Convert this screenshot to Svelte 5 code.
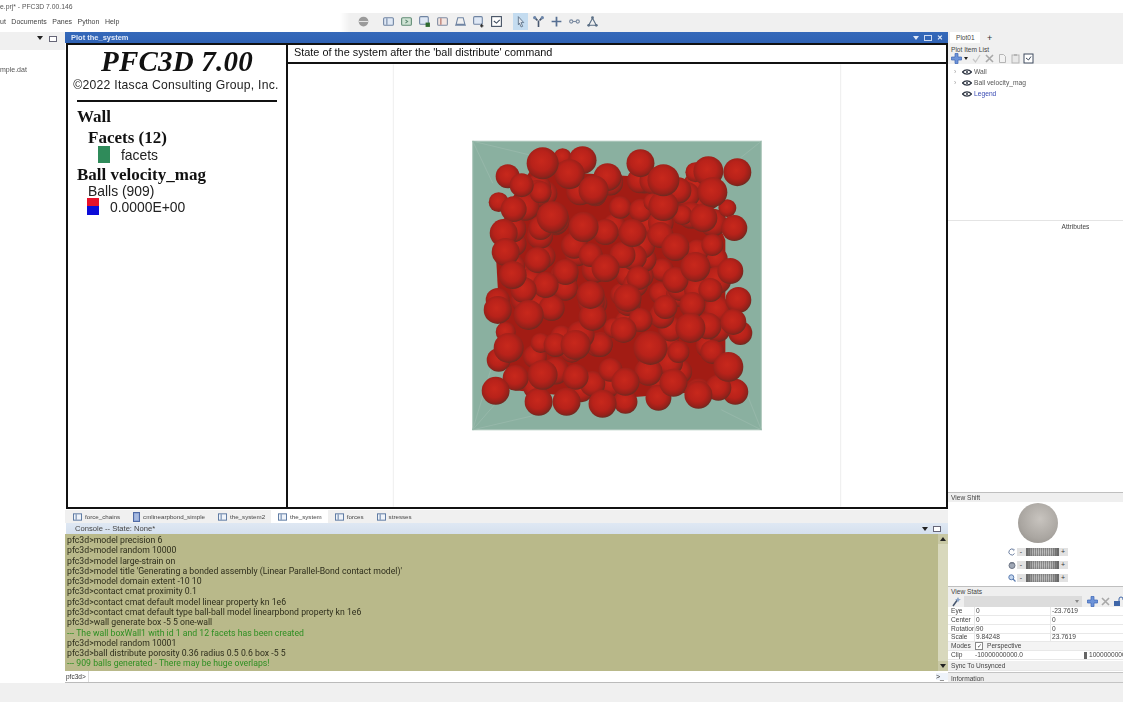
<script>
	// balls in page coordinates [x, y, r], read off the plot
	const visible = [
		[542,163,16],[562,157,9],[582,160,14],[569,174,15],[507,176,12],[521,185,12],[540,192,11],[593,190,15],[607,177,14],
		[498,202,10],[513,209,13],[552,217,16],[583,227,15],[503,233,14],[540,228,12],[505,252,14],[537,260,13],[565,272,13],
		[512,275,14],[605,268,14],[605,232,13],[640,163,14],[663,180,16],[708,171,15],[737,172,14],[695,172,10],[712,192,15],
		[663,206,15],[652,202,9],[703,218,14],[727,208,9],[734,228,13],[632,233,14],[675,247,14],[660,235,13],[622,255,13],
		[695,267,15],[730,271,13],[712,245,11],[638,278,12],[682,215,10],[627,298,14],[665,307,12],[692,305,13],[738,300,13],
		[623,330,13],[690,328,15],[733,322,13],[740,333,12],[650,348,17],[678,352,11],[728,367,15],[712,352,12],[648,372,14],
		[625,382,14],[673,383,14],[698,395,14],[735,392,13],[658,398,13],[625,402,12],[718,388,13],[497,310,14],[497,300,12],
		[528,315,15],[551,308,13],[508,348,15],[498,360,12],[540,343,10],[580,335,14],[575,345,15],[542,375,15],[575,377,13],
		[495,391,14],[538,402,14],[566,402,14],[602,404,14],[592,317,14],[613,328,10],[515,378,13],[505,332,10],[590,295,14],
		[555,345,12],[600,345,12],[640,320,12],[610,370,12],[675,280,13],[710,290,12],[590,255,12],[545,285,13],[523,290,13]
	];

	// balls behind the visible ones, so no wall shows through the middle
	let seed = 17;
	function rnd() {
		seed = (seed * 16807) % 2147483647;
		return seed / 2147483647;
	}
	const filler = [];
	for (let i = 0; i < 90; i++) {
		filler.push([512 + rnd() * 208, 178 + rnd() * 215, 11 + rnd() * 3]);
	}
	// nearer balls look bigger, so paint by radius
	const bySize = (a, b) => a[2] - b[2];
	const balls = [...filler.sort(bySize), ...visible.sort(bySize)];

	const tabs = [
		{ name: 'force_chains' },
		{ name: 'cmlinearpbond_simple', script: true },
		{ name: 'the_system2' },
		{ name: 'the_system', active: true },
		{ name: 'forces' },
		{ name: 'stresses' }
	];

	const lines = [
		['pfc3d>model precision 6'],
		['pfc3d>model random 10000'],
		['pfc3d>model large-strain on'],
		["pfc3d>model title 'Generating a bonded assembly (Linear Parallel-Bond contact model)'"],
		['pfc3d>model domain extent -10 10'],
		['pfc3d>contact cmat proximity 0.1'],
		['pfc3d>contact cmat default model linear property kn 1e6'],
		['pfc3d>contact cmat default type ball-ball model linearpbond property kn 1e6'],
		['pfc3d>wall generate box -5 5 one-wall'],
		['--- The wall boxWall1 with id 1 and 12 facets has been created', true],
		['pfc3d>model random 10001'],
		['pfc3d>ball distribute porosity 0.36 radius 0.5 0.6 box -5 5'],
		['--- 909 balls generated - There may be huge overlaps!', true]
	];

	const stats = [
		['Eye', '0', '-23.7619'],
		['Center', '0', '0'],
		['Rotation', '90', '0'],
		['Scale', '9.84248', '23.7619']
	];
</script>

{#snippet winIcon()}
	<svg class="tab-icon" viewBox="0 0 10 8"><rect x=".5" y=".5" width="9" height="7" fill="#eef3fa" stroke="#51709c"/><path d="M3.5 1v6" stroke="#51709c"/></svg>
{/snippet}

{#snippet eye()}
	<svg class="eye" viewBox="0 0 10 6"><path d="M.5 3C3 .2 7 .2 9.5 3 7 5.8 3 5.8.5 3Z" fill="none" stroke="#2c3340" stroke-width="1.2"/><circle cx="5" cy="3" r="1" fill="#2c3340"/></svg>
{/snippet}

{#snippet cross()}
	<svg class="tool" viewBox="0 0 11 11"><path d="M4 .5h3v3.500h3.500v3H7v3.500H4V7H.5V4H4Z" fill="#6d93d8" stroke="#3a64b4" stroke-width=".7"/></svg>
{/snippet}

<div class="app">
	<div class="titlebar">e.prj* - PFC3D 7.00.146</div>

	<div class="menubar">
		<nav class="menu">
			<span class="cut">ut</span><span>Documents</span><span>Panes</span><span>Python</span><span>Help</span>
		</nav>
		<div class="toolbar">
			<svg class="tb" viewBox="0 0 12 12"><circle cx="6" cy="6" r="4.500" fill="#9a9a9a"/><path d="M1.500 6h9" stroke="#e4e4e4"/></svg>
			<div class="tb-group">
				<svg class="tb" viewBox="0 0 12 12"><rect x="1.500" y="2.500" width="9" height="7" rx="1" fill="#dfe8f5" stroke="#6f84a2"/><path d="M4.500 3v6" stroke="#6f84a2"/></svg>
				<svg class="tb" viewBox="0 0 12 12"><rect x="1.500" y="2.500" width="9" height="7" rx="1" fill="#cfe3d4" stroke="#5f8a74"/><path d="M5 4.500l2 1.500-2 1.500" fill="none" stroke="#5f8a74"/></svg>
				<svg class="tb" viewBox="0 0 12 12"><rect x="1.500" y="1.500" width="8" height="7" rx="1" fill="#dfe8f5" stroke="#6f84a2"/><rect x="7" y="7" width="4" height="4" fill="#2f6b2f"/></svg>
				<svg class="tb" viewBox="0 0 12 12"><rect x="1.500" y="2.500" width="9" height="7" rx="1" fill="#f3e6e2" stroke="#7f8ca2"/><path d="M4.500 3v6" stroke="#b0665a"/></svg>
				<svg class="tb" viewBox="0 0 12 12"><path d="M3.500 2.500h5l1.500 6h-8ZM1 9.500h10" fill="none" stroke="#6f84a2"/></svg>
				<svg class="tb" viewBox="0 0 12 12"><rect x="1.500" y="1.500" width="8" height="7" rx="1" fill="#dfe8f5" stroke="#6f84a2"/><path d="M9 8v3.500M7.500 10h3" stroke="#222"/></svg>
				<svg class="tb" viewBox="0 0 12 12"><rect x="1.500" y="1.500" width="9" height="9" fill="#fff" stroke="#3e4b5e"/><path d="M3.500 5.500l2.500 2 3-3" fill="none" stroke="#3e4b5e"/></svg>
			</div>
			<div class="tb-group second">
				<span class="tb-on"><svg class="tb" viewBox="0 0 12 12"><path d="M4 1.500l5 5.500H6.500L8 10.500l-1.500.5L5 7.500 4 9Z" fill="#dfe6ef" stroke="#5c7086" stroke-width=".8"/></svg></span>
				<svg class="tb" viewBox="0 0 12 12"><path d="M2 2l3 3M10 2L7 5M6 5v6" stroke="#46566e" stroke-width="1.500"/><circle cx="2.500" cy="2.500" r="1.500" fill="#6d86aa"/><circle cx="9.500" cy="2.500" r="1.500" fill="#6d86aa"/></svg>
				<svg class="tb" viewBox="0 0 12 12"><path d="M6 1.500v9M1.500 6h9" stroke="#566f92" stroke-width="1.600"/></svg>
				<svg class="tb" viewBox="0 0 12 12"><circle cx="3" cy="6" r="1.500" fill="none" stroke="#7a8aa0"/><circle cx="9" cy="6" r="1.500" fill="none" stroke="#7a8aa0"/><path d="M4.500 6h3" stroke="#7a8aa0"/></svg>
				<svg class="tb" viewBox="0 0 12 12"><path d="M6 3L2.500 9.500h7Z" fill="none" stroke="#5c7086"/><circle cx="6" cy="2.500" r="1.300" fill="#5c7086"/><circle cx="2.500" cy="9.500" r="1.300" fill="#5c7086"/><circle cx="9.500" cy="9.500" r="1.300" fill="#5c7086"/></svg>
			</div>
		</div>
	</div>

	<div class="workspace">
		<aside class="project">
			<div class="project-head">
				<span class="arrow-down"></span><span class="mini-btn"></span>
			</div>
			<div class="project-file">mple.dat</div>
		</aside>

		<main class="center">
			<div class="plot-title">
				<span>Plot the_system</span>
				<span class="win-btns"><span class="arrow-down white"></span><span class="mini-btn white"></span><span class="close">✕</span></span>
			</div>
			<div class="plot">
				<div class="legend">
					<h1>PFC3D 7.00</h1>
					<p class="copy">©2022 Itasca Consulting Group, Inc.</p>
					<hr />
					<h2>Wall</h2>
					<h3>Facets (12)</h3>
					<div class="legend-row facets"><span class="swatch green"></span>facets</div>
					<h2 class="ball-head">Ball velocity_mag</h2>
					<div class="balls-label">Balls (909)</div>
					<div class="legend-row velocity"><span class="swatch redblue"></span>0.0000E+00</div>
				</div>
				<div class="view">
					<div class="view-title">State of the system after the 'ball distribute' command</div>
					<svg class="scene" viewBox="287 64 659 443">
						<defs>
							<radialGradient id="ball" cx=".46" cy=".43" r=".57">
								<stop offset="0" stop-color="#c8281c" />
								<stop offset=".55" stop-color="#b8221a" />
								<stop offset=".85" stop-color="#96211a" />
								<stop offset="1" stop-color="#6e2a20" />
							</radialGradient>
						</defs>
						<path d="M392.500 64v443M840.500 64v443" stroke="#eeeeee" />
						<rect x="472" y="141" width="289" height="289" fill="#8ab0a0" stroke="#a9c4b8" />
						<path d="M472 141l58 14M472 141l20 42M761 141l-30 24M472 430l40-46M472 430l60-14M472 430l18-60M761 430l-20-50M761 430l-40-20" stroke="#97b8aa" fill="none" />
						<path d="M530 170L700 180 725 240V390L600 400 510 390 500 340 495 250 510 200Z" fill="#a21c14" />
						{#each balls as [x, y, r]}
							<circle cx={x} cy={y} {r} fill="url(#ball)" />
						{/each}
					</svg>
				</div>
			</div>

			<div class="tabs">
				{#each tabs as tab}
					<div class="tab" class:active={tab.active}>
						{#if tab.script}
							<svg class="tab-icon script" viewBox="0 0 7 10"><rect x=".5" y=".5" width="6" height="9" fill="#8ea6d6" stroke="#4f6aa5"/><path d="M1.500 3h4M1.500 5h4M1.500 7h4" stroke="#e4ebf8" stroke-width=".6"/></svg>
						{:else}
							{@render winIcon()}
						{/if}
						<span>{tab.name}</span>
					</div>
				{/each}
			</div>

			<div class="console-head">
				<span>Console -- State: None*</span>
				<span class="win-btns dark"><span class="arrow-down"></span><span class="mini-btn"></span></span>
			</div>
			<div class="console">
				<div class="console-lines">
					{#each lines as [text, ok]}
						<div class:ok>{text}</div>
					{/each}
				</div>
				<div class="scrollbar">
					<span class="sb-btn"><span class="tri up"></span></span>
					<span class="sb-btn"><span class="tri down"></span></span>
				</div>
			</div>
			<div class="input-row">
				<span class="prompt">pfc3d&gt;</span>
				<span class="input"></span>
				<span class="shell">&gt;_</span>
			</div>
		</main>

		<aside class="side">
			<div class="side-tabs"><span class="side-tab">Plot01</span><span class="plus">+</span></div>
			<div class="items-label">Plot Item List</div>
			<div class="items-tools">
				{@render cross()}
				<span class="mini-tri"></span>
				<svg class="tool" viewBox="0 0 11 11"><path d="M2 6l2.500 3L9 2" fill="none" stroke="#c8c8c8" stroke-width="1.300"/></svg>
				<svg class="tool" viewBox="0 0 11 11"><path d="M2 2l7 7M9 2l-7 7" stroke="#a8a8a8" stroke-width="1.600"/></svg>
				<svg class="tool" viewBox="0 0 11 11"><path d="M2.500 1.500h4l2 2v6h-6Z" fill="#f2f2f2" stroke="#b5b5b5"/></svg>
				<svg class="tool" viewBox="0 0 11 11"><rect x="2" y="2" width="7" height="8" fill="#e8e8e8" stroke="#b5b5b5"/><rect x="4" y="1" width="3" height="2" fill="#b5b5b5"/></svg>
				<svg class="tool" viewBox="0 0 11 11"><rect x="1" y="1" width="9" height="9" fill="#fff" stroke="#3e4b5e"/><path d="M3 5l2.500 2L8 3.500" fill="none" stroke="#3e4b5e"/></svg>
			</div>
			<div class="tree">
				<div class="tree-row"><span class="chev">›</span>{@render eye()}<span>Wall</span></div>
				<div class="tree-row"><span class="chev">›</span>{@render eye()}<span>Ball velocity_mag</span></div>
				<div class="tree-row legend-item"><span class="chev"></span>{@render eye()}<span>Legend</span></div>
			</div>
			<div class="attributes">Attributes</div>

			<div class="pane-head">View Shift</div>
			<div class="shift">
				<div class="sphere"></div>
				<div class="slider-row">
					<svg class="slider-icon" viewBox="0 0 8 8"><path d="M6.500 5.500A3 3 0 1 1 5.500 1.500" fill="none" stroke="#6c7fa0"/><path d="M5 .5l1.500 1.500L5 3" fill="none" stroke="#6c7fa0" stroke-width=".7"/></svg>
					<span class="step">-</span><span class="track"></span><span class="step">+</span>
				</div>
				<div class="slider-row">
					<svg class="slider-icon" viewBox="0 0 8 8"><circle cx="4" cy="4.500" r="3" fill="#a0a8b6" stroke="#6c7484"/><path d="M3 1v2M5 1v2" stroke="#6c7484"/></svg>
					<span class="step">-</span><span class="track"></span><span class="step">+</span>
				</div>
				<div class="slider-row">
					<svg class="slider-icon" viewBox="0 0 8 8"><circle cx="3.300" cy="3.300" r="2.500" fill="#c4d6ee" stroke="#5a7cb0"/><path d="M5 5l2.500 2.500" stroke="#5a7cb0" stroke-width="1.200"/></svg>
					<span class="step">-</span><span class="track"></span><span class="step">+</span>
				</div>
			</div>

			<div class="pane-head stats-head">View Stats</div>
			<div class="stats-tools">
				<svg class="wand" viewBox="0 0 11 11"><path d="M2 10L7 3" stroke="#44546c" stroke-width="1.500"/><path d="M7 1l1 2 2 .5-2 1L7 6.500 6 4.500l-2-1 2-.5Z" fill="#8aa4c8"/></svg>
				<div class="stats-combo"><span class="mini-tri gray"></span></div>
				{@render cross()}
				<svg class="tool" viewBox="0 0 11 11"><path d="M2 2l7 7M9 2l-7 7" stroke="#a8a8a8" stroke-width="1.600"/></svg>
				<svg class="tool" viewBox="0 0 11 11"><rect x="1" y="5" width="6" height="5" fill="#3f66a8"/><path d="M6 5V3a2 2 0 0 1 4 0v1" fill="none" stroke="#3f66a8"/></svg>
			</div>
			<div class="stats">
				{#each stats as [label, a, b]}
					<div class="stat-row">
						<span class="stat-label">{label}</span><span class="cell">{a}</span><span class="cell">{b}</span>
					</div>
				{/each}
				<div class="stat-row plain">
					<span class="stat-label">Modes</span>
					<span class="modes"><span class="check">✓</span>Perspective</span>
				</div>
				<div class="stat-row plain clip">
					<span class="stat-label">Clip</span><span class="clip-a">-10000000000.0</span><span class="spin"></span><span>1000000000</span>
				</div>
				<div class="stat-row plain sync"><span class="stat-label">Sync To</span><span>Unsynced</span></div>
			</div>
			<div class="information">Information</div>
		</aside>
	</div>

	<div class="statusbar"></div>
</div>

<style>
	:global(body) {
		margin: 0;
		background: #fff;
	}

	.app {
		width: 1123px;
		height: 702px;
		display: flex;
		flex-direction: column;
		overflow: hidden;
		font-family: "Liberation Sans", Arial, sans-serif;
		color: #333;
		filter: blur(0.4px);
	}

	.titlebar {
		height: 13px;
		line-height: 14px;
		font-size: 6.800px;
		color: #555;
		white-space: nowrap;
	}

	.menubar {
		height: 19px;
		display: flex;
		background: linear-gradient(90deg, #fff 0, #fff 340px, #f0f0f0 350px);
	}

	.menu {
		width: 350px;
		display: flex;
		align-items: center;
		gap: 5.500px;
		font-size: 7px;
		color: #444;
		padding-bottom: 3px;
		box-sizing: border-box;
	}

	.toolbar {
		display: flex;
		align-items: center;
		padding: 0 0 2px 7px;
	}

	.tb {
		width: 13px;
		height: 13px;
		display: block;
	}

	.tb-group {
		display: flex;
		align-items: center;
		gap: 5px;
		margin-left: 12px;
	}

	.tb-group.second {
		margin-left: 10px;
	}

	.tb-on {
		background: #c4dcf0;
		padding: 2px 1px;
		margin-right: -1px;
	}

	.workspace {
		flex: 1;
		display: flex;
		min-height: 0;
	}

	.project {
		width: 65px;
		flex: none;
		background: #fff;
	}

	.project-head {
		height: 18px;
		background: #f0f0f0;
		display: flex;
		justify-content: flex-end;
		align-items: flex-start;
		gap: 6px;
		padding: 3px 8px 0 0;
		box-sizing: border-box;
	}

	.project-file {
		margin-top: 16px;
		font-size: 7px;
		color: #555;
		white-space: nowrap;
	}

	.arrow-down {
		width: 0;
		height: 0;
		margin-top: 1px;
		border: 3px solid transparent;
		border-top: 4px solid #222;
		border-bottom: 0;
	}

	.arrow-down.white {
		border-top-color: #dfe8f7;
	}

	.mini-btn {
		width: 6px;
		height: 4px;
		margin-top: 1px;
		background: #fff;
		border: 1px solid #667;
	}

	.mini-btn.white {
		background: transparent;
		border-color: #cfdcf2;
	}

	.center {
		width: 883px;
		flex: none;
		display: flex;
		flex-direction: column;
	}

	.plot-title {
		height: 11px;
		background: linear-gradient(#3569ba, #2f62b4);
		color: #dfe8f7;
		font-size: 7.500px;
		font-weight: 700;
		line-height: 11px;
		padding: 0 5px 0 6px;
		display: flex;
		justify-content: space-between;
	}

	.win-btns {
		display: flex;
		align-items: center;
		gap: 5px;
		height: 11px;
	}

	.close {
		font-size: 7px;
		color: #e6eefa;
	}

	.plot {
		height: 466px;
		box-sizing: border-box;
		margin-left: 1px;
		border: 2px solid #111;
		display: flex;
		background: #fff;
	}

	.legend {
		width: 218px;
		flex: none;
		border-right: 2px solid #111;
		color: #111;
	}

	.legend h1 {
		margin: 0;
		font: italic 700 29px/32px "Liberation Serif", serif;
		letter-spacing: 0.2px;
		text-align: center;
		color: #111;
	}

	.copy {
		margin: 0;
		font-size: 12.200px;
		line-height: 16px;
		letter-spacing: 0.25px;
		text-align: center;
		white-space: nowrap;
		color: #222;
		transform: translateX(-1px);
	}

	.legend hr {
		margin: 7px 9px 0 9px;
		height: 2px;
		background: #111;
		border: 0;
	}

	.legend h2 {
		margin: 5px 0 0 9px;
		font: 700 17px/20px "Liberation Serif", serif;
	}

	.legend h3 {
		margin: 1px 0 0 20px;
		font: 700 17px/20px "Liberation Serif", serif;
	}

	.legend-row {
		display: flex;
		align-items: center;
		font-size: 13.900px;
		height: 17px;
		color: #222;
	}

	.facets {
		padding-left: 30px;
		gap: 11px;
		margin-top: -2px;
	}

	.velocity {
		padding-left: 19px;
		gap: 11px;
		margin-top: -2px;
	}

	.swatch {
		width: 12px;
		height: 17px;
		flex: none;
	}

	.green {
		background: #2f8b5a;
	}

	.redblue {
		background: linear-gradient(#e8112a 50%, #0c0cd8 50%);
	}

	.legend .ball-head {
		margin-top: 2px;
	}

	.balls-label {
		margin: -2px 0 0 20px;
		font-size: 13.900px;
		line-height: 17px;
		color: #222;
	}

	.view {
		flex: 1;
		display: flex;
		flex-direction: column;
		min-width: 0;
	}

	.view-title {
		height: 17px;
		line-height: 15px;
		padding-left: 6px;
		font-size: 10.900px;
		color: #111;
		border-bottom: 2px solid #111;
		flex: none;
	}

	.scene {
		display: block;
		width: 100%;
		flex: 1;
		min-height: 0;
	}

	.tabs {
		height: 13px;
		margin-top: 1px;
		display: flex;
		background: #f0f0f0;
		padding-left: 1px;
	}

	.tab {
		display: flex;
		align-items: center;
		gap: 3px;
		padding: 0 6px 0 7px;
		font-size: 6.200px;
		color: #444;
		white-space: nowrap;
	}

	.tab.active {
		background: #fff;
	}

	.tab-icon {
		width: 9px;
		height: 8px;
		flex: none;
	}

	.tab-icon.script {
		width: 7px;
		height: 10px;
	}

	.console-head {
		height: 11px;
		background: linear-gradient(#dfe8f3, #d5e0ee);
		display: flex;
		justify-content: space-between;
		padding: 0 5px 0 9px;
		font-size: 7.600px;
		line-height: 11px;
		color: #444;
		margin-left: 1px;
	}

	.win-btns.dark {
		padding-right: 2px;
	}

	.console {
		height: 137px;
		display: flex;
		background: #b9b98a;
	}

	.console-lines {
		flex: 1;
		padding: 1px 0 0 2px;
		font-family: Roboto, "Liberation Sans", sans-serif;
		font-size: 8.700px;
		line-height: 10.280px;
		color: #2e2e1c;
		white-space: nowrap;
	}

	.ok {
		color: #2e8f22;
	}

	.scrollbar {
		width: 10px;
		display: flex;
		flex-direction: column;
		justify-content: space-between;
		background: #d8d8bc;
	}

	.sb-btn {
		height: 10px;
		display: flex;
		align-items: center;
		justify-content: center;
		background: #c8c8a4;
	}

	.tri {
		width: 0;
		height: 0;
		border: 3px solid transparent;
	}

	.tri.up {
		border-top: 0;
		border-bottom: 4px solid #222;
	}

	.tri.down {
		border-bottom: 0;
		border-top: 4px solid #222;
	}

	.input-row {
		height: 12px;
		display: flex;
		align-items: center;
		font-size: 6.500px;
		background: #fff;
		border-bottom: 1px solid #bbb;
		box-sizing: border-box;
	}

	.prompt {
		width: 22px;
		padding-left: 1px;
	}

	.input {
		flex: 1;
		align-self: stretch;
		border-left: 1px solid #ddd;
	}

	.shell {
		width: 12px;
		font-size: 7px;
		color: #222;
		background: #eef3fa;
	}

	.side {
		flex: 1;
		min-width: 0;
		display: flex;
		flex-direction: column;
		font-size: 6.600px;
		color: #444;
		white-space: nowrap;
		overflow: hidden;
		background: #fff;
	}

	.side-tabs {
		height: 11px;
		display: flex;
		background: #f0f0f0;
		padding-left: 2px;
		flex: none;
	}

	.side-tab {
		width: 30px;
		background: #fff;
		padding-left: 6px;
		box-sizing: border-box;
		line-height: 12px;
	}

	.plus {
		margin-left: 7px;
		font-size: 9px;
		line-height: 12px;
		color: #333;
	}

	.items-label {
		height: 10px;
		line-height: 13px;
		padding-left: 3px;
		background: #f0f0f0;
		flex: none;
	}

	.items-tools {
		height: 11px;
		display: flex;
		align-items: center;
		gap: 2px;
		padding-left: 3px;
		background: #f0f0f0;
		flex: none;
	}

	.tool {
		width: 11px;
		height: 11px;
		flex: none;
	}

	.mini-tri {
		width: 0;
		height: 0;
		border: 2px solid transparent;
		border-top: 3px solid #222;
		border-bottom: 0;
		margin-right: 1px;
	}

	.mini-tri.gray {
		border-top-color: #888;
	}

	.tree {
		height: 157px;
		padding-top: 2px;
		box-sizing: border-box;
		border-bottom: 1px solid #e4e4e4;
		flex: none;
	}

	.tree-row {
		display: flex;
		align-items: center;
		height: 11px;
		font-size: 6.700px;
		color: #555;
	}

	.legend-item {
		color: #3a4cb4;
	}

	.chev {
		width: 14px;
		padding-left: 6px;
		box-sizing: border-box;
		color: #999;
		flex: none;
	}

	.eye {
		width: 10px;
		height: 6px;
		margin-right: 2px;
		flex: none;
	}

	.attributes {
		height: 271px;
		box-sizing: border-box;
		padding: 2px 0 0 80px;
		text-align: center;
		flex: none;
	}

	.pane-head {
		height: 9px;
		line-height: 9px;
		padding-left: 3px;
		background: #efefef;
		border-top: 1px solid #bfbfbf;
		flex: none;
	}

	.shift {
		height: 84px;
		flex: none;
		display: flex;
		flex-direction: column;
		align-items: center;
		padding: 1px 0 0 4px;
		box-sizing: border-box;
	}

	.sphere {
		width: 40px;
		height: 40px;
		border-radius: 50%;
		background: radial-gradient(circle at 55% 40%, #c8c4bf 0, #aaa6a1 60%, #8b8883 100%);
		margin-bottom: 2px;
		flex: none;
	}

	.slider-row {
		display: flex;
		align-items: center;
		height: 13px;
		flex: none;
	}

	.slider-icon {
		width: 8px;
		height: 8px;
		margin-right: 1px;
	}

	.step {
		width: 9px;
		height: 8px;
		background: #e2e2e2;
		font-size: 7px;
		line-height: 8px;
		text-align: center;
		color: #333;
	}

	.track {
		width: 33px;
		height: 8px;
		background: repeating-linear-gradient(90deg, #bdbdbd 0 1px, #8a8a8a 1px 2px);
		box-shadow: inset 6px 0 4px -2px #666, inset -6px 0 4px -2px #666;
	}

	.stats-tools {
		height: 11px;
		flex: none;
		display: flex;
		align-items: center;
		gap: 2px;
		padding-left: 3px;
		background: #efefef;
	}

	.wand {
		width: 11px;
		height: 11px;
		flex: none;
	}

	.stats-combo {
		width: 118px;
		height: 11px;
		background: #dcdcdc;
		flex: none;
		display: flex;
		justify-content: flex-end;
		align-items: center;
		padding-right: 2px;
		box-sizing: border-box;
		margin-right: 3px;
	}

	.stats {
		flex: none;
		background: #fff;
	}

	.stat-row {
		display: grid;
		grid-template-columns: 23px 76px 76px;
		height: 8px;
		line-height: 8.500px;
		padding-left: 3px;
		border-bottom: 1px solid #e8e8e8;
		margin-bottom: -0.200px;
	}

	.cell {
		padding-left: 1px;
		border-left: 1px solid #e8e8e8;
	}

	.stat-row.plain {
		background: #f4f4f4;
		display: flex;
		white-space: nowrap;
	}

	.plain .stat-label {
		width: 24px;
		flex: none;
	}

	.modes {
		display: flex;
		align-items: center;
	}

	.check {
		width: 6px;
		height: 6px;
		margin-right: 4px;
		border: 1px solid #888;
		background: #fff;
		font-size: 6px;
		line-height: 6px;
		text-align: center;
	}

	.stat-row.clip {
		background: #fff;
	}

	.clip-a {
		width: 109px;
		flex: none;
	}

	.spin {
		width: 3px;
		height: 7px;
		margin: 1px 2px 0 0;
		background: #666;
		flex: none;
	}

	.stat-row.sync {
		background: #f0f0f0;
		height: 9px;
		line-height: 10px;
		margin-top: 1px;
	}

	.sync .stat-label {
		width: 25px;
	}

	.information {
		height: 11px;
		line-height: 11px;
		padding-left: 3px;
		margin-top: auto;
		background: #eeeeee;
		border-top: 1px solid #c4c4c4;
		border-bottom: 1px solid #c4c4c4;
		box-sizing: border-box;
		flex: none;
	}

	.statusbar {
		height: 19px;
		flex: none;
		background: #f0f0f0;
	}
</style>
